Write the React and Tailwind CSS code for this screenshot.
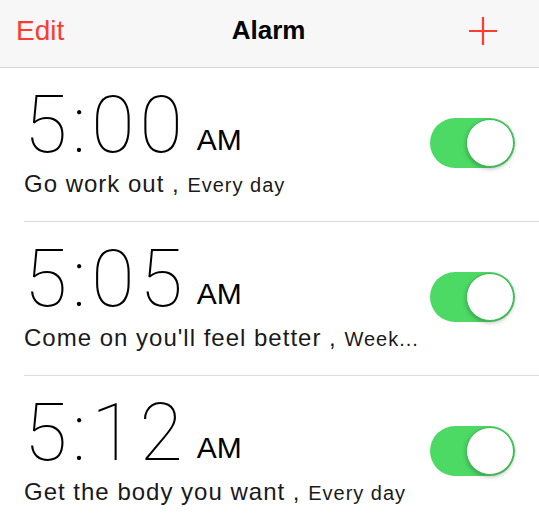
import React from 'react';

const alarms = [
  { time: '5:00', label: 'Go work out', repeat: 'Every day' },
  { time: '5:05', label: "Come on you'll feel better", repeat: 'Week...' },
  { time: '5:12', label: 'Get the body you want', repeat: 'Every day' },
];

const Toggle = () => (
  <div className="relative mb-[4px] h-[50px] w-[85px] rounded-full bg-[#4cd964]">
    <div className="absolute right-[1px] top-[1px] h-[48px] w-[48px] rounded-full border border-[#3fb957] bg-white shadow-[0_2px_4px_rgba(0,0,0,0.25)]" />
  </div>
);

const AlarmRow = ({ alarm }) => (
  <div className="flex h-[154px] items-center justify-between border-b border-[#dcdcdf] pr-[24px]">
    <div className="flex flex-col self-start pt-[18px]">
      <div className="flex items-baseline text-black">
        <span className="font-['Roboto',sans-serif] text-[79px] font-thin leading-none tracking-[5px]">
          {alarm.time}
        </span>
        <span className="relative -top-[2px] ml-[9px] font-['Liberation_Sans',sans-serif] text-[30px] leading-none">AM</span>
      </div>
      <div className="mt-[7px] font-['Liberation_Sans',sans-serif] text-[24px] leading-[24px] tracking-[1px] text-[#1a1a1a]">
        {alarm.label} , <span className="text-[20px] tracking-[1px]">{alarm.repeat}</span>
      </div>
    </div>
    <Toggle />
  </div>
);

export default function App() {
  return (
    <div className="h-[529px] w-[539px] overflow-hidden bg-white font-['Liberation_Sans',sans-serif]">
      <div className="flex h-[68px] items-center justify-between border-b border-[#d6d6d9] bg-[#f7f7f8] px-[14px] pb-[6px]">
        <span className="ml-[2px] text-[28px] text-[#ff3b30]">Edit</span>
        <span className="ml-[6px] text-[26px] font-bold text-black">Alarm</span>
        <svg width="32" height="32" viewBox="0 0 32 32" className="mr-[26px]">
          <path d="M16 2v28M2 16h28" stroke="#ff3b30" strokeWidth="2.2" fill="none" />
        </svg>
      </div>
      <div className="pl-[24px]">
        {alarms.map((a) => (
          <AlarmRow key={a.time} alarm={a} />
        ))}
      </div>
    </div>
  );
}
